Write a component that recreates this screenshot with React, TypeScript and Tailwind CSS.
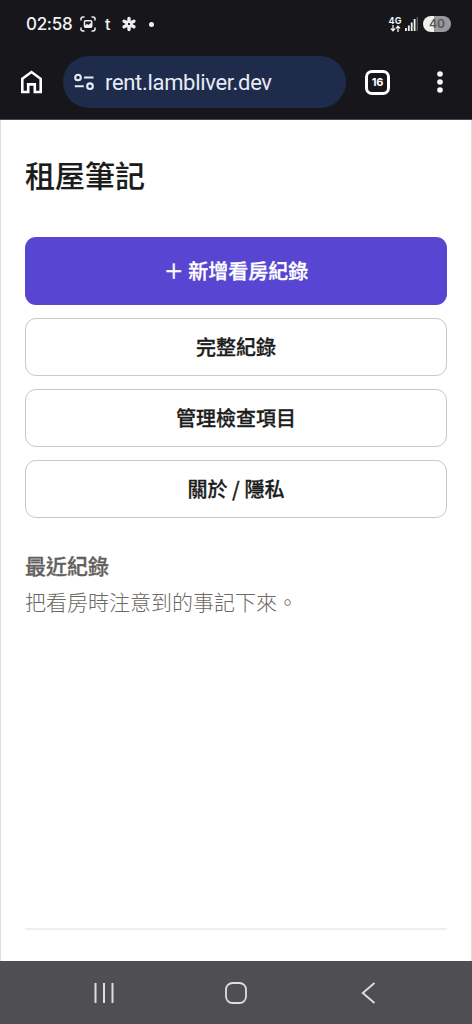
import { type ReactNode } from "react";

type ActionButtonProps = {
  primary?: boolean;
  children: ReactNode;
};

const actions = ["完整紀錄", "管理檢查項目", "關於 / 隱私"];

function StatusBar() {
  return (
    <div className="flex h-12 items-center pl-[26px] pr-[21px] text-[#f1f1f3]">
      <span className="w-[47px] whitespace-nowrap font-['Inter',sans-serif] text-[17px] font-medium leading-none tracking-[-0.3px]">
        02:58
      </span>
      <svg className="ml-[7px]" width="16" height="16" viewBox="0 0 16 16" fill="none" stroke="currentColor" strokeWidth="1.5">
        <path d="M1 4.5V3q0-2 2-2h1.5M11.5 1H13q2 0 2 2v1.5M15 11.5V13q0 2-2 2h-1.5M4.5 15H3q-2 0-2-2v-1.5" />
        <rect x="4.5" y="4.7" width="7.2" height="6.6" rx="1" />
        <path d="M5 9.8l2-1.5 1.5.7L11.3 7v4H5z" fill="currentColor" strokeWidth=".5" />
      </svg>
      <span className="ml-[9px] w-[7px] font-['Inter',sans-serif] text-[16px] font-medium leading-none">t</span>
      <svg className="ml-[9px]" width="16" height="16" viewBox="-8 -8 16 16" fill="none" stroke="currentColor" strokeWidth="3.4" strokeLinecap="round">
        <path d="M0-2.8V-5.6M0 2.8V5.6M2.4-1.4L4.9-2.8M2.4 1.4L4.9 2.8M-2.4-1.4L-4.9-2.8M-2.4 1.4L-4.9 2.8" />
        <circle r="2" strokeWidth="1.6" />
      </svg>
      <span className="ml-[12px] size-[5px] rounded-full bg-[#f1f1f3]" />

      <div className="ml-auto flex items-center">
        <div className="flex w-[14px] flex-col items-center">
          <span className="font-['Inter',sans-serif] text-[9px] font-bold leading-[9px]">4G</span>
          <svg width="11" height="7" viewBox="0 0 11 7" fill="none" stroke="currentColor" strokeWidth="1.3">
            <path d="M3 0v5.5M.9 3.5L3 5.7l2.1-2.2M8 7V1.3M5.900 3.400L8 1.2l2.1 2.2" />
          </svg>
        </div>
        <svg className="ml-[2px]" width="15" height="16" viewBox="0 0 15 16" fill="currentColor">
          <path d="M1 12h1.8v3H1zM3.9 9.5h1.8V15H3.9zM6.8 6.5h1.8V15H6.8zM9.7 3h1.8v12H9.7z" />
          <path d="M12.6 1h1.3v14h-1.3z" fill="#606064" />
        </svg>
        <span className="ml-[4px] flex h-[16px] w-[28px] items-center justify-center rounded-full bg-[linear-gradient(to_right,#eeeeef_40%,#99999d_40%)] font-['Inter',sans-serif] text-[12px] font-semibold leading-none text-[#56565a]">
          40
        </span>
      </div>
    </div>
  );
}

function AddressBar() {
  return (
    <div className="flex h-[71px] items-start pl-[20px] pr-[29px] pt-[8px] text-white">
      <div className="flex h-[52px] w-[43px] items-center">
        <svg width="23" height="26" viewBox="0 0 23 26" fill="none" stroke="currentColor" strokeWidth="2.6">
          <path d="M2.3 9.8L11.5 3l9.2 6.8v13.2h-5.9v-7.6H8.2v7.6H2.3z" />
        </svg>
      </div>
      <div className="flex h-[52px] w-[283px] items-center rounded-full bg-[#1e2b4b] pl-[11px] text-[#e6ebf8]">
        <svg width="20" height="18" viewBox="0 0 20 18" fill="none" stroke="currentColor" strokeWidth="2.1">
          <circle cx="4" cy="4.5" r="2.8" />
          <path d="M10 4.5h9.5M.8 13.2h9" />
          <circle cx="16" cy="13.2" r="2.8" />
        </svg>
        <span className="ml-[11px] whitespace-nowrap pt-0.5 font-['Roboto',sans-serif] text-[22px] leading-none tracking-[-0.32px]">
          rent.lambliver.dev
        </span>
      </div>
      <div className="ml-[19px] flex h-[52px] items-center">
        <span className="flex size-[25px] items-center justify-center rounded-[7px] border-3 border-white font-['Inter',sans-serif] text-[11px] font-bold leading-none tracking-[-0.3px]">
          16
        </span>
      </div>
      <div className="ml-auto flex h-[52px] w-[6px] items-center">
        <svg width="6" height="22" viewBox="0 0 6 22" fill="currentColor">
          <circle cx="3" cy="3" r="2.8" />
          <circle cx="3" cy="11" r="2.8" />
          <circle cx="3" cy="19" r="2.8" />
        </svg>
      </div>
    </div>
  );
}

function ActionButton({ primary, children }: Readonly<ActionButtonProps>) {
  return (
    <button
      type="button"
      className={`flex w-full items-center justify-center whitespace-pre rounded-[11px] text-[20px] font-medium leading-none [-webkit-text-stroke:0.3px] ${
        primary
          ? "h-[68px] bg-[#5845d1] text-white"
          : "h-[58px] border-[1.5px] border-[#c8c8c8] bg-white text-[#1c1c1c]"
      }`}
    >
      {children}
    </button>
  );
}

function NavigationBar() {
  return (
    <div className="flex h-[63px] items-center bg-[#4f4e53] pl-[93px] pt-px text-[#dededf]">
      <svg width="22" height="22" viewBox="0 0 22 22" fill="none" stroke="currentColor" strokeWidth="2">
        <path d="M2.5 1v20M11 1v20M19.5 1v20" />
      </svg>
      <svg className="ml-[110px]" width="22" height="22" viewBox="0 0 22 22" fill="none" stroke="currentColor" strokeWidth="1.8">
        <rect x="1" y="1" width="20" height="20" rx="6.5" />
      </svg>
      <svg className="ml-[114px]" width="14" height="22" viewBox="0 0 14 22" fill="none" stroke="currentColor" strokeWidth="1.9">
        <path d="M13.500 1L1.800 11l11.700 10" />
      </svg>
    </div>
  );
}

export default function App() {
  return (
    <div className="flex h-[1024px] w-[472px] flex-col overflow-hidden bg-white font-['Noto_Sans_CJK_TC',sans-serif]">
      <header className="h-[120px] border-b border-[#48484b] bg-[#17171b]">
        <StatusBar />
        <AddressBar />
      </header>

      <main className="flex flex-1 flex-col border-x border-[#dedede] px-[24px]">
        <h1 className="mt-[33px] text-[30px] font-medium leading-[42px] text-[#1c1c1c] [-webkit-text-stroke:0.15px]">
          租屋筆記
        </h1>

        <div className="mt-[42px] flex flex-col gap-[13px]">
          <ActionButton primary>＋ 新增看房紀錄</ActionButton>
          {actions.map((label) => (
            <ActionButton key={label}>{label}</ActionButton>
          ))}
        </div>

        <section className="mt-[32px]">
          <h2 className="text-[21px] font-medium leading-[30px] text-[#62605c] [-webkit-text-stroke:0.3px]">最近紀錄</h2>
          <p className="mt-[6px] text-[21px] font-light leading-[30px] text-[#6b6964]">把看房時注意到的事記下來。</p>
        </section>

        <footer className="mb-[31px] mt-auto border-t-2 border-[#efefef]" />
      </main>

      <NavigationBar />
    </div>
  );
}
